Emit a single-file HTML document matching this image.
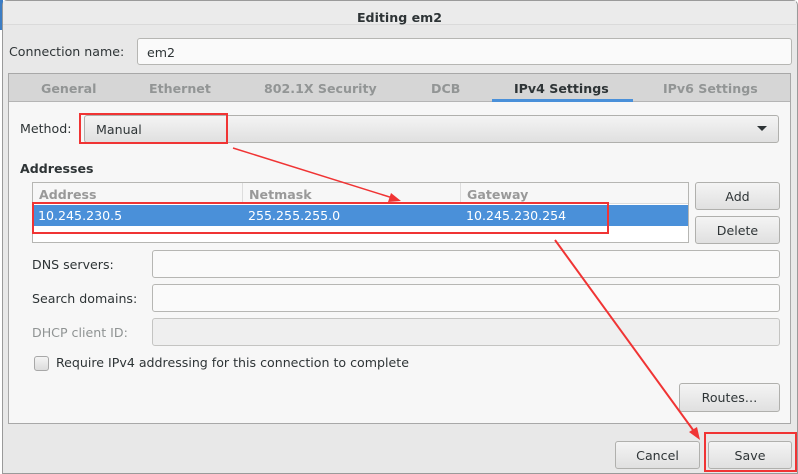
<!DOCTYPE html>
<html><head><meta charset="utf-8"><style>
*{box-sizing:border-box;margin:0;padding:0}
body{width:798px;height:474px;overflow:hidden;background:#fff;font-family:"DejaVu Sans","Liberation Sans",sans-serif;font-size:12.6px;color:#2e3436;position:relative}
.a{position:absolute}
.dlg{left:2px;top:0;width:796px;height:474px;background:#e8e8e8;border:1px solid #9a9a9a;border-radius:5px 5px 0 0}
.title{left:3px;top:1px;width:793px;height:24px;background:#ebebeb;border-bottom:1px solid #dadada;text-align:center;font-weight:bold;line-height:33px}
.entry{background:#fafafa;border:1px solid #b6b6b3;border-radius:3px}
.btn{border:1px solid #b0b0ad;border-radius:3px;background:linear-gradient(#f4f4f4,#e0e0e0);text-align:center}
.lbl{line-height:16px}
.tab{top:81px;color:#929595;font-weight:bold;line-height:16px}
.red{border:2px solid #f03434}
</style></head><body>
<div class="a" style="left:0;top:0;width:3px;height:30px;background:#3c7dc4"></div>
<div class="a dlg"></div>
<div class="a title">Editing em2</div>
<div class="a lbl" style="left:9px;top:44px">Connection name:</div>
<div class="a entry" style="left:137px;top:38px;width:655px;height:27px;padding:5px 9px;line-height:17px">em2</div>
<div class="a" style="left:8px;top:73px;width:783px;height:351px;background:#f7f7f7;border:1px solid #a8a8a8"></div>
<div class="a" style="left:9px;top:74px;width:781px;height:28px;background:#d6d6d6;border-bottom:1px solid #b5b5b5"></div>
<div class="a tab" style="left:41px">General</div>
<div class="a tab" style="left:149px">Ethernet</div>
<div class="a tab" style="left:264px">802.1X Security</div>
<div class="a tab" style="left:431px">DCB</div>
<div class="a tab" style="left:514px;color:#2e3436">IPv4 Settings</div>
<div class="a" style="left:492px;top:99px;width:141px;height:3px;background:#4a90d9"></div>
<div class="a tab" style="left:663px">IPv6 Settings</div>
<div class="a lbl" style="left:20px;top:121px">Method:</div>
<div class="a btn" style="left:84px;top:115px;width:695px;height:28px;padding:6px 11px;text-align:left;line-height:16px">Manual</div>
<div class="a" style="left:757px;top:126px;width:0;height:0;border-left:5px solid transparent;border-right:5px solid transparent;border-top:5px solid #2e3436"></div>
<div class="a red" style="left:79px;top:113px;width:149px;height:31px"></div>
<div class="a lbl" style="left:20px;top:161px;font-weight:bold">Addresses</div>
<div class="a" style="left:32px;top:182px;width:657px;height:61px;background:#fff;border:1px solid #b6b6b3"></div>
<div class="a" style="left:33px;top:183px;width:655px;height:21px;background:#f7f7f7;border-bottom:1px solid #ddd"></div>
<div class="a" style="left:242px;top:183px;width:1px;height:21px;background:#ddd"></div>
<div class="a" style="left:460px;top:183px;width:1px;height:21px;background:#ddd"></div>
<div class="a lbl" style="left:39px;top:187px;color:#999;font-weight:bold">Address</div>
<div class="a lbl" style="left:249px;top:187px;color:#999;font-weight:bold">Netmask</div>
<div class="a lbl" style="left:467px;top:187px;color:#999;font-weight:bold">Gateway</div>
<div class="a" style="left:33px;top:205px;width:655px;height:21px;background:#4a90d9"></div>
<div class="a lbl" style="left:38px;top:208px;color:#fff">10.245.230.5</div>
<div class="a lbl" style="left:248px;top:208px;color:#fff">255.255.255.0</div>
<div class="a lbl" style="left:466px;top:208px;color:#fff">10.245.230.254</div>
<div class="a red" style="left:32px;top:202px;width:577px;height:32px"></div>
<div class="a btn" style="left:695px;top:182px;width:85px;height:28px;line-height:27px">Add</div>
<div class="a btn" style="left:695px;top:216px;width:85px;height:28px;line-height:27px">Delete</div>
<div class="a lbl" style="left:32px;top:257px">DNS servers:</div>
<div class="a entry" style="left:152px;top:250px;width:628px;height:28px"></div>
<div class="a lbl" style="left:32px;top:291px">Search domains:</div>
<div class="a entry" style="left:152px;top:284px;width:628px;height:28px"></div>
<div class="a lbl" style="left:32px;top:325px;color:#8f9393">DHCP client ID:</div>
<div class="a entry" style="left:152px;top:318px;width:628px;height:28px;background:#efefef;border-color:#c4c4c2"></div>
<div class="a" style="left:34px;top:356px;width:15px;height:15px;border:1px solid #a8a8a8;border-radius:3px;background:linear-gradient(#f4f4f4,#dcdcdc)"></div>
<div class="a lbl" style="left:56px;top:355px">Require IPv4 addressing for this connection to complete</div>
<div class="a btn" style="left:679px;top:383px;width:101px;height:29px;line-height:28px">Routes…</div>
<div class="a btn" style="left:615px;top:441px;width:85px;height:28px;line-height:27px">Cancel</div>
<div class="a btn" style="left:708px;top:441px;width:84px;height:28px;line-height:27px">Save</div>
<div class="a red" style="left:704px;top:432px;width:93px;height:40px"></div>
<svg class="a" style="left:0;top:0" width="798" height="474">
<line x1="233" y1="148" x2="396" y2="199" stroke="#f03434" stroke-width="1.5"/>
<polygon points="401,201 388,202 391,193" fill="#f03434"/>
<line x1="555" y1="240" x2="696" y2="434" stroke="#f03434" stroke-width="2"/>
<polygon points="700,440 689,432 697,427" fill="#f03434"/>
</svg>
</body></html>
